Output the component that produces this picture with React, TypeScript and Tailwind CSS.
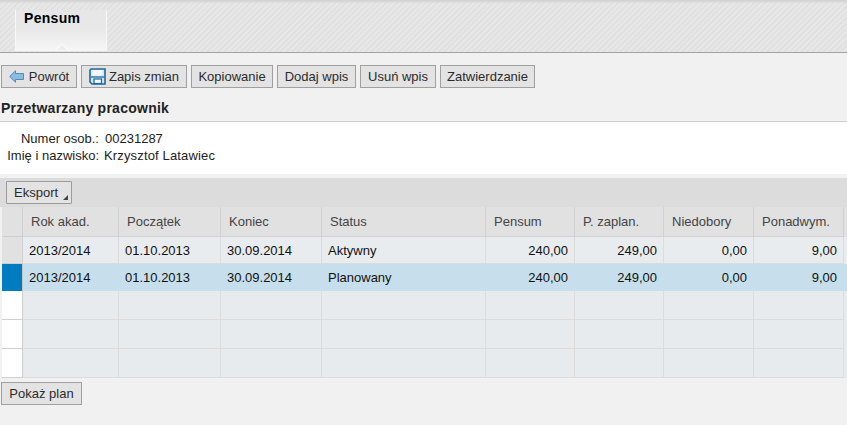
import type { ReactNode } from "react";

const columns = ["Rok akad.", "Początek", "Koniec", "Status", "Pensum", "P. zaplan.", "Niedobory", "Ponadwym."];

const rows = [
  ["2013/2014", "01.10.2013", "30.09.2014", "Aktywny", "240,00", "249,00", "0,00", "9,00"],
  ["2013/2014", "01.10.2013", "30.09.2014", "Planowany", "240,00", "249,00", "0,00", "9,00"],
];

const gridCols = "grid grid-cols-[21px_96px_102px_101px_164px_89px_89px_90px_90px]";

function Button({ children, className }: { children: ReactNode; className: string }) {
  return (
    <button className={`flex h-[23px] items-center justify-center border border-[#a0a0a0] bg-[#e3e3e3] text-[13px] text-[#2b2b2b] ${className}`}>
      {children}
    </button>
  );
}

function BackIcon() {
  return (
    <svg width="15" height="13" viewBox="0 0 15 13" className="mr-[5px]">
      <path d="M0.7 6.5 L6.5 0.8 V3.5 H14.5 V9.5 H6.5 V12.2 Z" fill="#8dbbe0" stroke="#4d8dbd" strokeWidth="1" />
    </svg>
  );
}

function SaveIcon() {
  return (
    <svg width="17" height="17" viewBox="0 0 17 17" className="mr-[3px]">
      <path d="M1 2.5 Q1 1 2.5 1 H16 V16 H3 L1 14 Z" fill="#d6e4ee" stroke="#1c6a9e" strokeWidth="1.6" />
      <rect x="3.5" y="2" width="10" height="5.5" fill="#f4f7fa" />
      <rect x="2" y="8" width="13" height="2" fill="#5f97bd" />
      <rect x="5" y="11" width="7.5" height="4.5" fill="#f4f7fa" stroke="#1c6a9e" strokeWidth="1.2" />
    </svg>
  );
}

export default function App() {
  return (
    <div className="flex h-[425px] w-[847px] flex-col overflow-hidden bg-[#f1f1f1] font-['Liberation_Sans',Arial,sans-serif] text-[13px] text-[#222]">
      {/* Tab strip */}
      <div className="h-[53px] shrink-0 border-b border-[#a3a3a3] bg-[repeating-linear-gradient(135deg,#e7e7e7_0px,#e7e7e7_2px,#e1e1e1_2px,#e1e1e1_4px)] pl-[15px] pt-[10px] shadow-[inset_0_3px_2px_-1px_#d2d2d2]">
        <div className="relative h-[41px] w-[92px] border-x border-[#f8f8f8] bg-gradient-to-b from-[#e6e6e6] via-[#e9e9e9] to-[#f6f6f6] pl-[8px] text-[14px] leading-[16px] font-bold tracking-[0.3px] text-black">
          Pensum
          <svg width="14" height="8" viewBox="0 0 14 8" className="absolute bottom-0 left-[39px]">
            <path d="M0 8 L7 0.7 L14 8 Z" fill="#eeeeee" stroke="#ffffff" strokeWidth="1" />
          </svg>
        </div>
      </div>

      {/* Toolbar */}
      <div className="flex shrink-0 gap-[4px] pl-[1px] pt-[12px]">
        <Button className="w-[76px]"><BackIcon />Powrót</Button>
        <Button className="w-[106px]"><SaveIcon />Zapis zmian</Button>
        <Button className="w-[82px]">Kopiowanie</Button>
        <Button className="w-[79px]">Dodaj wpis</Button>
        <Button className="w-[76px]">Usuń wpis</Button>
        <Button className="w-[95px]">Zatwierdzanie</Button>
      </div>

      <div className="h-[33px] shrink-0 pl-[1px] pt-[12px] text-[14px] leading-[16px] font-bold tracking-[0.25px] text-[#222]">
        Przetwarzany pracownik
      </div>

      {/* Employee details */}
      <div className="grid h-[53px] shrink-0 grid-cols-[99px_1fr] content-start border-t border-[#cfcfcf] bg-white pt-[8px] text-[13px] leading-[17px] text-[#222]">
        <div className="text-right">Numer osob.:</div>
        <div className="pl-[6px]">00231287</div>
        <div className="text-right">Imię i nazwisko:</div>
        <div className="pl-[5px] tracking-[0.15px]">Krzysztof Latawiec</div>
      </div>

      <div className="mt-[4px] flex h-[29px] shrink-0 items-center bg-[#dcdcdc] pl-[6px]">
        <button className="relative h-[23px] w-[66px] rounded-[1px] border border-[#9c9c9c] bg-[#e3e3e3] pl-[7px] text-left text-[13px] text-[#2b2b2b]">
          Eksport
          <span className="absolute bottom-[3px] right-[3px] h-0 w-0 border-b-[5px] border-l-[5px] border-b-[#444] border-l-transparent" />
        </button>
      </div>

      {/* Table */}
      <div className="ml-[2px] flex shrink-0 flex-col">
        <div className={`${gridCols} h-[30px] bg-[#e1e1e1]`}>
          <div className="border-b border-r border-[#cfcfcf]" />
          {columns.map((c) => (
            <div key={c} className="flex items-center border-b border-r border-[#d0d0d0] pl-[8px] text-[#444]">
              {c}
            </div>
          ))}
        </div>
        {rows.map((row, i) => (
          <div key={i} className={`${gridCols} h-[27px] ${i === 1 ? "bg-[#c7dfec]" : "bg-[#e9ecef]"}`}>
            <div className={`border-r ${i === 1 ? "border-[#c5c5c5] bg-[#007cc0]" : "border-b border-[#cfcfcf] bg-[#e1e1e1]"}`} />
            {row.map((cell, j) => (
              <div
                key={j}
                className={`flex items-center border-r text-[#111] ${i === 1 ? "border-[#c7dfec]" : "border-b border-[#dcdcdc] pt-[1px]"} ${j < 4 ? "pl-[6px]" : "justify-end pr-[6px]"}`}
              >
                {cell}
              </div>
            ))}
          </div>
        ))}
        {[0, 1, 2].map((n) => (
          <div key={n} className={`${gridCols} h-[29px] bg-[#e8ebee]`}>
            <div className="border-b border-r border-[#cfcfcf] bg-white" />
            {columns.map((c) => (
              <div key={c} className="border-b border-r border-[#dcdcdc]" />
            ))}
          </div>
        ))}
      </div>

      <div className="pl-[1px] pt-[4px]">
        <Button className="w-[81px]">Pokaż plan</Button>
      </div>
    </div>
  );
}
